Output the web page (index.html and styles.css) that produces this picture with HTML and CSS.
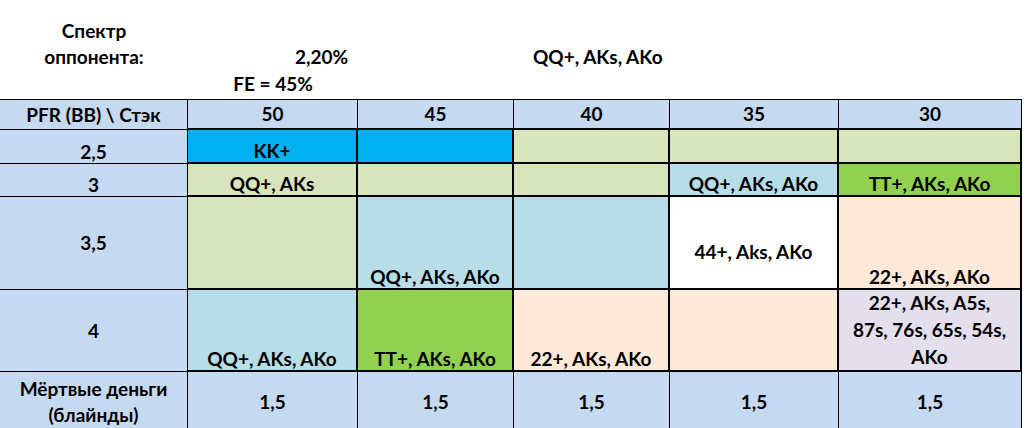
FILE: index.html
```html
<!DOCTYPE html>
<html lang="ru">
<head>
<meta charset="utf-8">
<title>Спектр оппонента</title>
<link rel="stylesheet" href="styles.css">
</head>
<body>
<div class="sheet">
  <div class="intro">
    <div class="intro-label">Спектр<br>оппонента:</div>
    <div class="intro-pct">2,20%</div>
    <div class="intro-range">QQ+, AKs, AKo</div>
    <div class="intro-fe">FE = 45%</div>
  </div>

  <div class="grid">
    <div class="c hd lbl">PFR (BB) \ Стэк</div>
    <div class="c hd">50</div>
    <div class="c hd">45</div>
    <div class="c hd">40</div>
    <div class="c hd">35</div>
    <div class="c hd">30</div>

    <div class="c lbl">2,5</div>
    <div class="c d first cyan">KK+</div>
    <div class="c d cyan"></div>
    <div class="c d olive"></div>
    <div class="c d olive"></div>
    <div class="c d olive last"></div>

    <div class="c lbl">3</div>
    <div class="c d first olive">QQ+, AKs</div>
    <div class="c d olive"></div>
    <div class="c d olive"></div>
    <div class="c d aqua">QQ+, AKs, AKo</div>
    <div class="c d green last">TT+, AKs, AKo</div>

    <div class="c lbl mid">3,5</div>
    <div class="c d first olive"></div>
    <div class="c d aqua">QQ+, AKs, AKo</div>
    <div class="c d aqua"></div>
    <div class="c d white mid low">44+, Aks, AKo</div>
    <div class="c d peach last">22+, AKs, AKo</div>

    <div class="c lbl mid">4</div>
    <div class="c d first aqua">QQ+, AKs, AKo</div>
    <div class="c d green">TT+, AKs, AKo</div>
    <div class="c d peach">22+, AKs, AKo</div>
    <div class="c d peach"></div>
    <div class="c d lav last wrap">22+, AKs, A5s,<br>87s, 76s, 65s, 54s,<br>AKo</div>

    <div class="c lbl ft mid">Мёртвые деньги<br>(блайнды)</div>
    <div class="c ft mid">1,5</div>
    <div class="c ft mid">1,5</div>
    <div class="c ft mid">1,5</div>
    <div class="c ft mid">1,5</div>
    <div class="c ft mid">1,5</div>
  </div>
</div>
</body>
</html>
```

FILE: styles.css
```css
html, body {
  margin: 0;
  padding: 0;
  background: #ffffff;
  overflow: hidden;
}

.sheet {
  font-family: Lato, "Noto Sans", "Liberation Sans", sans-serif;
  font-weight: 700;
  font-size: 19px;
  line-height: 26px;
  color: #000000;
  width: 1026px;
}

.intro {
  display: grid;
  grid-template-columns: 188px 170px 156px 156px 169px 183px;
  grid-template-rows: 72px 27px;
  height: 99px;
}

.intro-label {
  grid-column: 1;
  grid-row: 1;
  align-self: end;
  text-align: center;
  padding-bottom: 2px;
}

.intro-pct {
  grid-column: 2;
  grid-row: 1;
  align-self: end;
  text-align: right;
  padding-right: 10px;
  padding-bottom: 2px;
}

.intro-range {
  grid-column: 4;
  grid-row: 1;
  align-self: end;
  padding-left: 19px;
  padding-bottom: 2px;
  white-space: nowrap;
}

.intro-fe {
  grid-column: 2;
  grid-row: 2;
  align-self: end;
  text-align: center;
  padding-bottom: 2px;
}

.grid {
  display: grid;
  grid-template-columns: 188px 170px 156px 156px 169px 183px;
  grid-template-rows: 31px 34px 33px 93px 82px 60px;
}

.c {
  box-sizing: border-box;
  display: flex;
  align-items: flex-end;
  justify-content: center;
  text-align: center;
  padding: 0 3px;
  white-space: nowrap;
  line-height: 22px;
}

.hd {
  background: #c5d9f1;
  border-top: 1px solid #000;
  border-right: 1px solid #000;
  border-bottom: 2px solid #000;
  align-items: center;
  padding: 0 3px;
}

.lbl {
  background: #c5d9f1;
  border-right: 1px solid #000;
  border-bottom: 1px solid #000;
}

.hd.lbl {
  border-bottom: 1px solid #000;
}

.d {
  border-right: 2px solid #000;
  border-bottom: 2px solid #000;
}

.ft {
  background: #c5d9f1;
  border-right: 1px solid #000;
  line-height: 26px;
}

.mid {
  align-items: center;
}

.low {
  padding-top: 18px;
}

.wrap {
  white-space: normal;
  align-items: flex-end;
  line-height: 27px;
  padding-bottom: 0;
}

.cyan { background: #00b0f0; }
.olive { background: #d8e4bc; }
.aqua { background: #b7dee8; }
.green { background: #92d050; }
.peach { background: #fde9d9; }
.lav { background: #e4dfec; }
.white { background: #ffffff; }
```
